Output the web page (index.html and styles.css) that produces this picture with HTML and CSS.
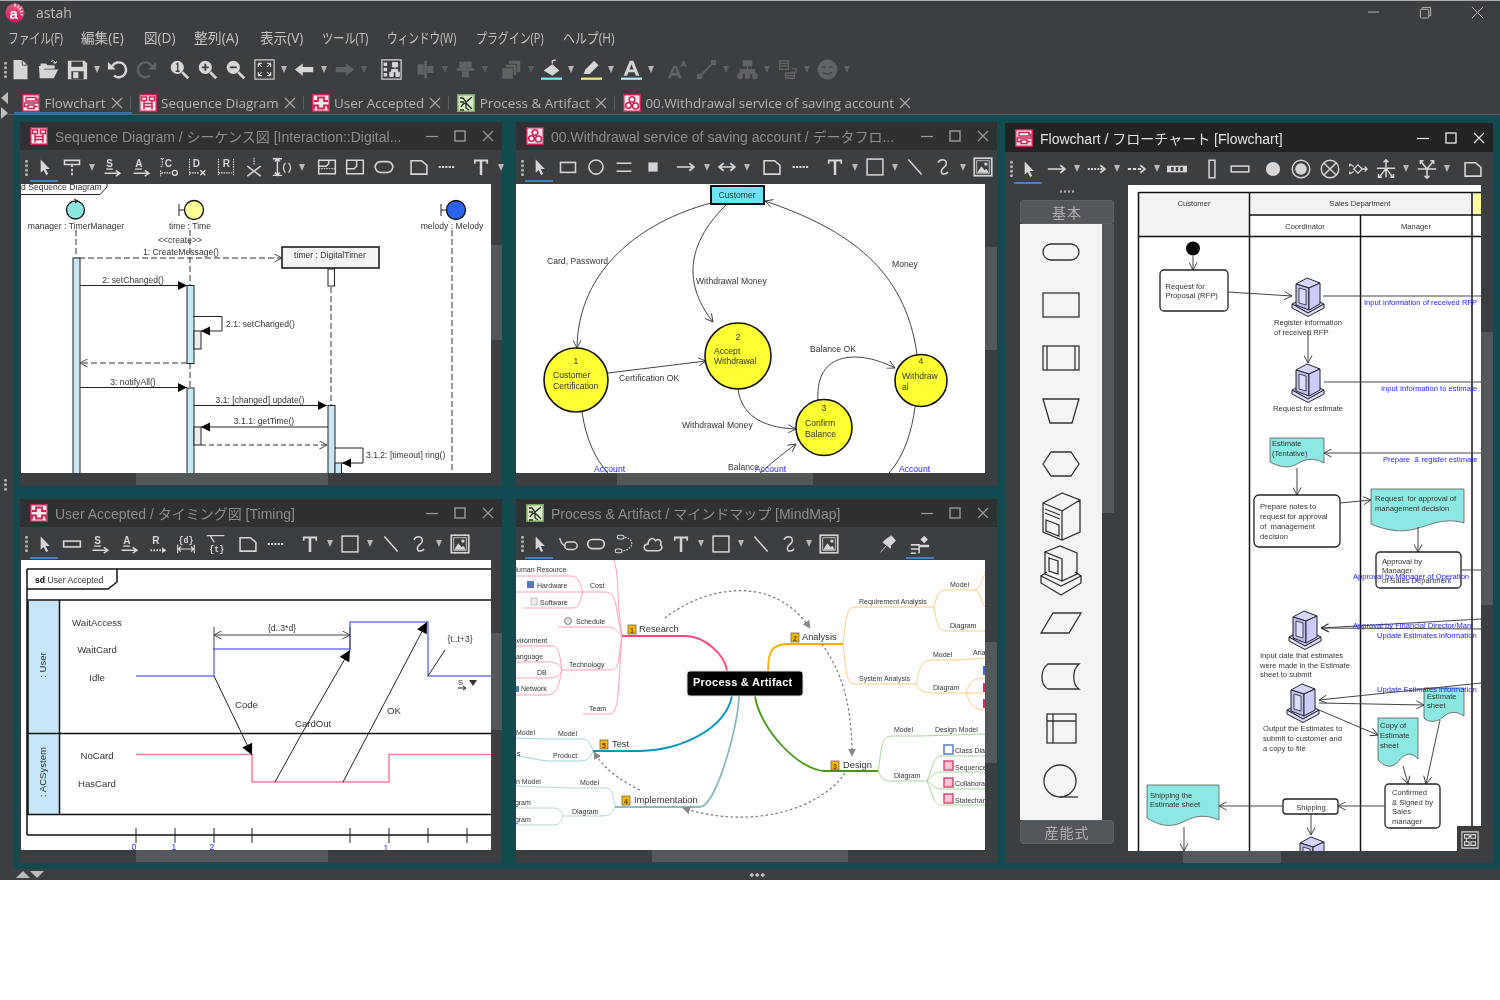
FILE: index.html
```html
<!DOCTYPE html>
<html lang="ja">
<head>
<meta charset="utf-8">
<title>astah</title>
<link rel="stylesheet" href="styles.css">
</head>
<body>
<svg class="defs" xmlns="http://www.w3.org/2000/svg">
  <defs>
    <linearGradient id="logoGrad" x1="0" y1="0" x2="0" y2="1"><stop offset="0" stop-color="#e05a7a"/><stop offset="1" stop-color="#d3175f"/></linearGradient>
    <marker id="op" viewBox="0 0 10 10" refX="9.5" refY="5" markerWidth="9" markerHeight="9" markerUnits="userSpaceOnUse" orient="auto-start-reverse"><path d="M1 .5L9.5 5L1 9.5" fill="none" stroke="#333" stroke-width="1"/></marker>
    <marker id="fl" viewBox="0 0 10 10" refX="10" refY="5" markerWidth="9" markerHeight="10" markerUnits="userSpaceOnUse" orient="auto-start-reverse"><path d="M0 0L10 5L0 10Z" fill="#000"/></marker>
    <marker id="flb" viewBox="0 0 10 10" refX="10" refY="5" markerWidth="12" markerHeight="11" markerUnits="userSpaceOnUse" orient="auto"><path d="M0 0L10 5L0 10Z" fill="#000"/></marker>
    <marker id="gr" viewBox="0 0 10 10" refX="9" refY="5" markerWidth="8" markerHeight="8" markerUnits="userSpaceOnUse" orient="auto"><path d="M0 0L10 5L0 10Z" fill="#888"/></marker>

    <symbol id="sel" viewBox="0 0 24 24"><path d="M8 3V19L11.5 15.5L14.5 21.5L17 20.5L14 14.5H19Z" fill="currentColor"/></symbol>
    <symbol id="T" viewBox="0 0 24 24"><path d="M3.500 3H20.500V8H18.500V5.500H13.500V21.500H10.500V5.500H5.500V8H3.500Z" fill="currentColor"/></symbol>
    <symbol id="box" viewBox="0 0 24 24"><rect x="2.500" y="2.500" width="19" height="19" fill="none" stroke="currentColor" stroke-width="1.8"/></symbol>
    <symbol id="ln" viewBox="0 0 24 24"><path d="M4 3L20 21" fill="none" stroke="currentColor" stroke-width="1.8"/></symbol>
    <symbol id="curl" viewBox="0 0 24 24"><path d="M6 7C8 2 16 2 16 8C16 12 10 13 10 17C10 22 16 21 18 18" fill="none" stroke="currentColor" stroke-width="1.800"/></symbol>
    <symbol id="pic" viewBox="0 0 24 24"><rect x="1.500" y="1.500" width="21" height="21" fill="#3c3f41" stroke="currentColor" stroke-width="2"/><rect x="4.500" y="4.500" width="15" height="15" fill="none" stroke="currentColor" stroke-width="1"/><path d="M5 19L10 11L14 16L16 14L19 19Z" fill="currentColor"/><circle cx="15.500" cy="8.500" r="2" fill="currentColor"/></symbol>
    <symbol id="note" viewBox="0 0 24 24"><path d="M2.500 4.500H15L21.500 10V20.500H2.500Z" fill="none" stroke="currentColor" stroke-width="1.900"/></symbol>
    <symbol id="dots" viewBox="0 0 24 24"><path d="M2 12H22" fill="none" stroke="currentColor" stroke-width="2.200" stroke-dasharray="2.600 1.400"/></symbol>
    <symbol id="arr" viewBox="0 0 24 24"><path d="M1 12H21M16 7.500L21.500 12L16 16.500" fill="none" stroke="currentColor" stroke-width="2"/></symbol>
    <symbol id="dbl" viewBox="0 0 24 24"><path d="M3 12H21M8 7.500L2.500 12L8 16.500M16 7.500L21.500 12L16 16.500" fill="none" stroke="currentColor" stroke-width="2"/></symbol>
    <symbol id="dotarr" viewBox="0 0 24 24"><path d="M1 12H19" fill="none" stroke="currentColor" stroke-width="2.200" stroke-dasharray="2.400 1.400"/><path d="M16 7.500L21.500 12L16 16.500" fill="none" stroke="currentColor" stroke-width="2"/></symbol>
    <symbol id="dasharr" viewBox="0 0 24 24"><path d="M1 12H19" fill="none" stroke="currentColor" stroke-width="2.200" stroke-dasharray="4 2"/><path d="M16 7.500L21.500 12L16 16.500" fill="none" stroke="currentColor" stroke-width="2"/></symbol>
    <symbol id="lane" viewBox="0 0 24 24"><rect x="0" y="8" width="24" height="8" fill="currentColor"/><path d="M5 9.500H8V14.500H5ZM10.500 9.500H13.500V14.500H10.500ZM16 9.500H19V14.500H16Z" fill="#3c3f41"/></symbol>
    <symbol id="wmin" viewBox="0 0 14 14"><path d="M1 7.5H13" stroke="currentColor" stroke-width="1.2"/></symbol>
    <symbol id="wmax" viewBox="0 0 14 14"><rect x="2" y="2" width="10" height="10" fill="none" stroke="currentColor" stroke-width="1.4"/></symbol>
    <symbol id="wclose" viewBox="0 0 14 14"><path d="M2 2L12 12M12 2L2 12" stroke="currentColor" stroke-width="1.2"/></symbol>

    <symbol id="d-flow" viewBox="0 0 18 18"><rect x=".75" y=".75" width="16.5" height="16.5" fill="#fbe6eb" stroke="#cc2457" stroke-width="1.5"/><path d="M4 3.5H14V7H4ZM6 11H12V14.500H6ZM14 5.500H16V9H2.500V12.500H6M12 12.500H15.500" fill="#fff" stroke="#cc2457" stroke-width="1.5"/></symbol>
    <symbol id="d-seq" viewBox="0 0 18 18"><rect x=".75" y=".75" width="16.5" height="16.5" fill="#fbe6eb" stroke="#cc2457" stroke-width="1.5"/><path d="M2.500 3H7.500V6.500H2.500ZM10.500 3H15.500V6.500H10.500ZM5 6.500V15.500M13 6.500V15.500M5 9.500H13M5 12.500H13" fill="#fff" stroke="#cc2457" stroke-width="1.5"/></symbol>
    <symbol id="d-time" viewBox="0 0 18 18"><rect x=".75" y=".75" width="16.5" height="16.5" fill="#fbe6eb" stroke="#cc2457" stroke-width="1.5"/><path d="M2 7H6V3.500H12V7H16M2 15.500V11.500H6V14.500H12V11.500H16V15.500" fill="none" stroke="#cc2457" stroke-width="1.8"/></symbol>
    <symbol id="d-dfd" viewBox="0 0 18 18"><rect x=".75" y=".75" width="16.5" height="16.5" fill="#fbe6eb" stroke="#cc2457" stroke-width="1.5"/><circle cx="9" cy="5.500" r="2.800" fill="#fff" stroke="#cc2457" stroke-width="1.6"/><circle cx="5.500" cy="11.500" r="2.800" fill="#fff" stroke="#cc2457" stroke-width="1.6"/><circle cx="12.500" cy="12" r="3" fill="#fff" stroke="#cc2457" stroke-width="1.6"/></symbol>
    <symbol id="d-mind" viewBox="0 0 18 18"><rect x=".75" y=".75" width="16.5" height="16.5" fill="#dcebc8" stroke="#79a860" stroke-width="1.5"/><path d="M3 4H6L9 8L15 3M3 8H7M4 13C6 9 8 9 9 9L15 15M9 9V14L12 16M3 16H7" fill="none" stroke="#1f3322" stroke-width="1.300"/></symbol>

    <symbol id="pc" viewBox="0 0 34 40"><path d="M1 27L17 19L33 27L17 36Z" fill="#ccccff" stroke="#222"/><path d="M1 27V31L17 39.5L33 31V27L17 36Z" fill="#dcdcff" stroke="#222"/><path d="M5 7L16 1L29 6L18 11Z" fill="#d6d6ff" stroke="#222"/><path d="M5 7L18 11V33L5 28Z" fill="#bfbfef" stroke="#222"/><path d="M18 11L29 6V27L18 33Z" fill="#ccccff" stroke="#222"/><path d="M8 11L15 13V28L8 26Z" fill="#dedeff" stroke="#222" stroke-width=".8"/></symbol>
  </defs>
</svg>

<div class="app">
  <div class="side-arrows"><span class="tri-l"></span><span class="tri-r"></span></div>

  <header class="titlebar">
    <svg class="logo" viewBox="0 0 20 20"><circle cx="10" cy="10" r="9.500" fill="url(#logoGrad)"/><text x="4.400" y="16" class="logo-a">a</text><path d="M10 .5V4M13.500 2.500L12.500 5.500M16.500 4.500L14 7M18 8.500L15 9M18 12L15.500 11.500" stroke="#fff" stroke-width="1.100"/></svg>
    <span class="app-name">astah</span>
    <div class="win-ctrls">
      <svg class="wc-min" viewBox="0 0 14 14"><path d="M1 6.5H13" stroke="currentColor"/></svg>
      <svg class="wc-res" viewBox="0 0 14 14"><path d="M3.5 3V1.5H12.5V10.5H10.5" fill="none" stroke="currentColor"/><rect x="1.5" y="3.5" width="9" height="9.5" rx="1.5" fill="none" stroke="currentColor"/></svg>
      <svg class="wc-close" viewBox="0 0 14 14"><path d="M1 1L13 13M13 1L1 13" stroke="currentColor"/></svg>
    </div>
  </header>

  <nav class="menubar">
    <span class="mi m1">ファイル(F)</span><span class="mi m2">編集(E)</span><span class="mi m3">図(D)</span><span class="mi m4">整列(A)</span><span class="mi m5">表示(V)</span><span class="mi m6">ツール(T)</span><span class="mi m7">ウィンドウ(W)</span><span class="mi m8">プラグイン(P)</span><span class="mi m9">ヘルプ(H)</span>
  </nav>

  <div class="maintools">
    <span class="grip"></span>
    <span class="c"><svg class="ic" viewBox="0 0 24 24"><path d="M4 1H14L20 7V23H4Z" fill="currentColor"/><path d="M14 1V7H20" fill="none" stroke="#3c3f41"/></svg></span>
    <span class="c g8"><svg class="ic" viewBox="0 0 24 24"><path d="M2 22L1 8H3V5H9L11 7H19V11H7L2 22L6 12H23L18 22Z" fill="currentColor"/><path d="M15 3C17 1 19 2 20 5M20 5L21.5 2.5M20 5L17.5 4" fill="none" stroke="currentColor" stroke-width="1.2"/></svg></span>
    <span class="c g9"><svg class="ic" viewBox="0 0 24 24"><path d="M1 2H20L23 5V23H1Z" fill="currentColor"/><rect x="5" y="3" width="13" height="6" fill="#3c3f41"/><rect x="5" y="14" width="14" height="9" fill="#3c3f41"/><rect x="7" y="15" width="6" height="7" fill="currentColor"/></svg></span>
    <span class="dd"></span>
    <span class="c"><svg class="ic" viewBox="0 0 24 24"><path d="M6 8A8.5 8.5 0 1 1 8 19" fill="none" stroke="currentColor" stroke-width="2.8"/><path d="M1 3V12H10Z" fill="currentColor"/></svg></span>
    <span class="c g9 dim"><svg class="ic" viewBox="0 0 24 24"><path d="M18 8A8.5 8.5 0 1 0 16 19" fill="none" stroke="currentColor" stroke-width="2.8"/><path d="M23 3V12H14Z" fill="currentColor"/></svg></span>
    <span class="c g13"><svg class="ic" viewBox="0 0 24 24"><circle cx="9.5" cy="9.5" r="7.5" fill="currentColor"/><path d="M15 15L22 22" stroke="currentColor" stroke-width="3.2"/><path d="M8 6L10 5V14M7.5 14H12" fill="none" stroke="#3c3f41" stroke-width="1.5"/></svg></span>
    <span class="c g8"><svg class="ic" viewBox="0 0 24 24"><circle cx="9.5" cy="9.5" r="7.5" fill="currentColor"/><path d="M15 15L22 22" stroke="currentColor" stroke-width="3.2"/><path d="M5.5 9.5H13.5M9.5 5.5V13.5" stroke="#3c3f41" stroke-width="2"/></svg></span>
    <span class="c g8"><svg class="ic" viewBox="0 0 24 24"><circle cx="9.5" cy="9.5" r="7.5" fill="currentColor"/><path d="M15 15L22 22" stroke="currentColor" stroke-width="3.2"/><path d="M5.5 9.5H13.5" stroke="#3c3f41" stroke-width="2"/></svg></span>
    <span class="c g9"><svg class="ic" viewBox="0 0 24 24"><rect x="1" y="1" width="22" height="22" fill="none" stroke="currentColor" stroke-width="1.3"/><path d="M5 5L9 9M5 5H9M5 5V9M19 5L15 9M19 5H15M19 5V9M5 19L9 15M5 19H9M5 19V15M19 19L15 15M19 19H15M19 19V15" fill="none" stroke="currentColor" stroke-width="1.4"/></svg></span>
    <span class="dd"></span>
    <span class="c"><svg class="ic" viewBox="0 0 24 24"><path d="M1 12L10 5V9H22V15H10V19Z" fill="currentColor"/></svg></span>
    <span class="dd"></span>
    <span class="c dim"><svg class="ic" viewBox="0 0 24 24"><path d="M23 12L14 5V9H2V15H14V19Z" fill="currentColor"/></svg></span>
    <span class="dd dim"></span>
    <span class="c g7"><svg class="ic" viewBox="0 0 24 24"><rect x="1" y="1" width="22" height="22" fill="none" stroke="currentColor" stroke-width="1.4"/><path d="M3 4H7V8H3ZM3 10H7V14H3ZM3 16H7V20H3Z" fill="currentColor"/><path d="M13 4H19V9H13ZM10 15H14V20H10ZM17 15H21V20H17ZM16 9V12M12 15V12H19V15" fill="currentColor" stroke="currentColor"/></svg></span>
    <span class="c g14 dim"><svg class="ic" viewBox="0 0 24 24"><path d="M12 2V22" stroke="currentColor" stroke-width="3"/><rect x="3" y="6" width="7" height="12" fill="currentColor"/><rect x="14" y="8" width="7" height="8" fill="currentColor"/></svg></span>
    <span class="dd dim"></span>
    <span class="c dim"><svg class="ic" viewBox="0 0 24 24"><path d="M2 12H22" stroke="currentColor" stroke-width="3"/><rect x="5" y="3" width="14" height="7" fill="currentColor"/><rect x="8" y="14" width="8" height="7" fill="currentColor"/></svg></span>
    <span class="dd dim"></span>
    <span class="c g6 dim"><svg class="ic" viewBox="0 0 24 24"><rect x="9" y="2" width="13" height="13" fill="currentColor"/><rect x="5" y="6" width="13" height="13" fill="currentColor" stroke="#3c3f41"/><rect x="1" y="10" width="13" height="13" fill="currentColor" stroke="#3c3f41"/></svg></span>
    <span class="dd dim"></span>
    <span class="c"><svg class="ic" viewBox="0 0 24 24"><path d="M3 13L13 6L21 13L13 19Z" fill="currentColor"/><path d="M13 5V2L17 1" fill="none" stroke="currentColor" stroke-width="1.6"/><path d="M0 22.500H24" stroke="#7fe7f2" stroke-width="2.600"/></svg></span>
    <span class="dd"></span>
    <span class="c"><svg class="ic" viewBox="0 0 24 24"><path d="M3 17L5 12L15 2L20 7L10 17Z" fill="currentColor"/><path d="M0 22.500H24" stroke="#f2ea7f" stroke-width="2.600"/></svg></span>
    <span class="dd"></span>
    <span class="c"><svg class="ic" viewBox="0 0 24 24"><path d="M3 19L10 2H14L21 19H17L15.5 15H8.5L7 19ZM9.7 12H14.3L12 6Z" fill="currentColor"/><path d="M0 22.500H24" stroke="#b8ecf2" stroke-width="2.600"/></svg></span>
    <span class="dd"></span>
    <span class="c g6 dim"><svg class="ic" viewBox="0 0 24 24"><path d="M1 22L7 8H11L17 22H13.5L12.5 19H5.5L4.5 22ZM6.5 16H11.5L9 10Z" fill="currentColor"/><path d="M15 9L18 2H20L23 9H21L20.5 8H17.5L17 9Z" fill="currentColor"/></svg></span>
    <span class="c g9 dim"><svg class="ic" viewBox="0 0 24 24"><path d="M5 19L19 5" stroke="currentColor" stroke-width="2"/><rect x="1" y="17" width="6" height="6" fill="currentColor"/><rect x="17" y="1" width="6" height="6" fill="currentColor"/></svg></span>
    <span class="dd dim"></span>
    <span class="c g1 dim"><svg class="ic" viewBox="0 0 24 24"><path d="M7 2H17V8H7ZM1 17H6V22H1ZM9.5 17H14.5V22H9.5ZM18 17H23V22H18ZM12 8V17M3.5 17V12H20.5V17" fill="currentColor" stroke="currentColor"/></svg></span>
    <span class="dd dim"></span>
    <span class="c dim"><svg class="ic" viewBox="0 0 24 24"><path d="M3 2H13V12H3ZM3 5H13M3 8H13M10 16H20V22H10ZM10 19H20M17 11H22V15H17" fill="none" stroke="currentColor" stroke-width="1.5"/></svg></span>
    <span class="dd dim"></span>
    <span class="c dim"><svg class="ic" viewBox="0 0 24 24"><circle cx="12" cy="12" r="11.500" fill="currentColor"/><path d="M6 10C7 8 9 8 10 10M14 10C15 8 17 8 18 10M7 15C9 18 15 18 17 15" fill="none" stroke="#3c3f41" stroke-width="1.2"/></svg></span>
    <span class="dd dim"></span>
  </div>

  <div class="tabs">
    <div class="tab tab-on"><svg class="dicon"><use href="#d-flow"/></svg><span class="tab-t">Flowchart</span><svg class="tab-x"><use href="#wclose"/></svg></div>
    <i class="tab-sep"></i>
    <div class="tab"><svg class="dicon"><use href="#d-seq"/></svg><span class="tab-t">Sequence Diagram</span><svg class="tab-x"><use href="#wclose"/></svg></div>
    <i class="tab-sep"></i>
    <div class="tab"><svg class="dicon"><use href="#d-time"/></svg><span class="tab-t">User Accepted</span><svg class="tab-x"><use href="#wclose"/></svg></div>
    <i class="tab-sep"></i>
    <div class="tab"><svg class="dicon"><use href="#d-mind"/></svg><span class="tab-t">Process &amp; Artifact</span><svg class="tab-x"><use href="#wclose"/></svg></div>
    <i class="tab-sep"></i>
    <div class="tab"><svg class="dicon"><use href="#d-dfd"/></svg><span class="tab-t">00.Withdrawal service of saving account</span><svg class="tab-x"><use href="#wclose"/></svg></div>
  </div>

  <main class="workspace">
    <aside class="side"><span class="grip"></span></aside>
    <div class="desktop">

      <!-- Sequence window -->
      <section class="win win-left win-top">
        <div class="wtitle"><svg class="dicon"><use href="#d-seq"/></svg><span class="wt">Sequence Diagram / シーケンス図 [Interaction::Digital...</span><div class="wbtn"><svg><use href="#wmin"/></svg><svg><use href="#wmax"/></svg><svg><use href="#wclose"/></svg></div></div>
        <div class="tools">
          <span class="grip"></span>
          <span class="c g2 on"><svg class="ic"><use href="#sel"/></svg></span>
          <span class="c g8"><svg class="ic" viewBox="0 0 24 24"><path d="M3 4H21V9H3Z" fill="none" stroke="currentColor" stroke-width="2"/><path d="M12 9V22" stroke="currentColor" stroke-width="2.200" stroke-dasharray="3 2"/></svg></span>
          <span class="dd"></span>
          <span class="c"><svg class="ic" viewBox="0 0 24 24"><text x="5" y="12" class="gl">S</text><path d="M5 14.500H13" stroke="currentColor" stroke-width="1.600"/><path d="M3 19.500H21M16.500 16L21.500 19.500L16.500 23" fill="none" stroke="currentColor" stroke-width="1.800"/></svg></span>
          <span class="c g9"><svg class="ic" viewBox="0 0 24 24"><text x="5" y="12" class="gl">A</text><path d="M5 14.500H13" stroke="currentColor" stroke-width="1.600"/><path d="M3 19.500H21M16.500 16L21.500 19.500L16.500 23" fill="none" stroke="currentColor" stroke-width="1.800"/></svg></span>
          <span class="c g8"><svg class="ic" viewBox="0 0 24 24"><text x="7" y="12" class="gl">C</text><path d="M2 2H6M4 2V10C4 12 2 12 2 10M2 16V23M3 19H15" fill="none" stroke="currentColor" stroke-width="1.400" stroke-dasharray="2 1"/><circle cx="19" cy="19" r="3" fill="none" stroke="currentColor" stroke-width="1.600"/></svg></span>
          <span class="c g8"><svg class="ic" viewBox="0 0 24 24"><text x="7" y="12" class="gl">D</text><path d="M3 2V23M3 19H15" fill="none" stroke="currentColor" stroke-width="1.400" stroke-dasharray="2 1"/><path d="M16 16L22 22M22 16L16 22" stroke="currentColor" stroke-width="1.700"/></svg></span>
          <span class="c g9"><svg class="ic" viewBox="0 0 24 24"><text x="8" y="12" class="gl">R</text><path d="M3 2V23M21 2V23M3 19H19" fill="none" stroke="currentColor" stroke-width="1.400" stroke-dasharray="2 1"/></svg></span>
          <span class="c g8"><svg class="ic" viewBox="0 0 24 24"><path d="M12 1V10" stroke="currentColor" stroke-width="1.400" stroke-dasharray="2 1"/><path d="M4 11L20 23M20 11L4 23" stroke="currentColor" stroke-width="1.800"/></svg></span>
          <span class="c g8"><svg class="ic" viewBox="0 0 24 24"><path d="M1 2H12M1 22H12M6.500 2V22M3.500 5.500L6.500 2L9.500 5.500M3.500 18.500L6.500 22L9.500 18.500" fill="none" stroke="currentColor" stroke-width="1.700"/><path d="M16 7C13 11 13 15 16 19M20 7C23 11 23 15 20 19" fill="none" stroke="currentColor" stroke-width="1.500"/></svg></span>
          <span class="dd"></span>
          <span class="c g5"><svg class="ic" viewBox="0 0 24 24"><path d="M2 4H22V20H2ZM2 11H11L14 8V4" fill="none" stroke="currentColor" stroke-width="1.800"/><path d="M2 14H22" stroke="currentColor" stroke-width="1.200" stroke-dasharray="2 1"/></svg></span>
          <span class="c g8"><svg class="ic" viewBox="0 0 24 24"><path d="M2 4H22V20H2ZM2 14H11L14 11V4" fill="none" stroke="currentColor" stroke-width="1.800"/></svg></span>
          <span class="c g9"><svg class="ic" viewBox="0 0 24 24"><rect x="1.500" y="5.500" width="21" height="13" rx="6.500" fill="none" stroke="currentColor" stroke-width="1.900"/></svg></span>
          <span class="c g15"><svg class="ic"><use href="#note"/></svg></span>
          <span class="c g8"><svg class="ic"><use href="#dots"/></svg></span>
          <span class="c g14"><svg class="ic"><use href="#T"/></svg></span>
          <span class="dd"></span>
        </div>
        <div class="wbody">
          <div class="cv cv-a">
            <svg class="dg" viewBox="21 184 470 289">
              <path class="k" d="M21 194.500H100L107 187V183"/>
              <text x="21" y="190" class="t9">d Sequence Diagram</text>
              <circle cx="75.500" cy="210" r="9" class="o" fill="#8ce6df"/><path class="k" d="M74 199L78 201L75 203"/>
              <circle cx="194" cy="210" r="9.500" class="o" fill="#ffff99"/><path class="k" d="M179 204V216M179 210H185"/>
              <circle cx="456" cy="210" r="9.500" class="o" fill="#2b62ee"/><path class="k" d="M441 204V216M441 210H447"/>
              <text x="76" y="229" class="t9 m">manager : TimerManager</text>
              <text x="190" y="229" class="t9 m">time : Time</text>
              <text x="452" y="229" class="t9 m">melody : Melody</text>
              <path class="ll" d="M76 230V258M190 230V285M190 363V388M331 287V405M452 230V473"/>
              <text x="180" y="243" class="t9 m">&lt;&lt;create&gt;&gt;</text>
              <text x="181" y="255" class="t9 m">1: CreateMessage()</text>
              <path class="dsh" d="M79 258H282" marker-end="url(#op)"/>
              <rect x="282" y="247" width="97" height="21" fill="#f2f3f2" stroke="#111" stroke-width="1.500"/>
              <text x="330" y="258" class="t9 m">timer : DigitalTimer</text>
              <rect x="328" y="269" width="6.500" height="17" class="k w"/>
              <rect x="73" y="258" width="7" height="220" class="act"/>
              <text x="133" y="283" class="t9 m">2: setChanged()</text>
              <path class="k" d="M80 285.500H187" marker-end="url(#fl)"/>
              <rect x="187" y="285.500" width="7" height="78" class="act"/>
              <rect x="194" y="331" width="7" height="18" class="k"/>
              <path class="k" d="M193 316.500H222V331H201" marker-end="url(#fl)"/>
              <text x="226" y="327" class="t9">2.1: setChanged()</text>
              <path class="dsh" d="M187 363H80" marker-end="url(#op)"/>
              <text x="133" y="385" class="t9 m">3: notifyAll()</text>
              <path class="k" d="M80 387.500H187" marker-end="url(#fl)"/>
              <rect x="187" y="388" width="7" height="90" class="act"/>
              <text x="260" y="403" class="t9 m">3.1: [changed] update()</text>
              <path class="k" d="M194 405.500H327" marker-end="url(#fl)"/>
              <rect x="328" y="405.500" width="7" height="75" class="act"/>
              <text x="264" y="424" class="t9 m">3.1.1: getTime()</text>
              <path class="k" d="M328 427H201" marker-end="url(#fl)"/>
              <rect x="194" y="427" width="7" height="18" class="k"/>
              <path class="dsh1" d="M201 445H327" marker-end="url(#op)"/>
              <path class="k" d="M335 448H363V463H342" marker-end="url(#fl)"/>
              <rect x="335" y="463" width="6.500" height="15" class="act"/>
              <text x="366" y="458" class="t9">3.1.2: [timeout] ring()</text>
            </svg>
          </div>
          <div class="vs"><i class="vthumb vt-a"></i></div>
        </div>
        <div class="hs"><i class="hthumb ht-a"></i></div>
      </section>

      <!-- DFD window -->
      <section class="win win-mid win-top">
        <div class="wtitle"><svg class="dicon"><use href="#d-dfd"/></svg><span class="wt">00.Withdrawal service of saving account / データフロ...</span><div class="wbtn"><svg><use href="#wmin"/></svg><svg><use href="#wmax"/></svg><svg><use href="#wclose"/></svg></div></div>
        <div class="tools">
          <span class="grip"></span>
          <span class="c g1 on"><svg class="ic"><use href="#sel"/></svg></span>
          <span class="c g9"><svg class="ic" viewBox="0 0 24 24"><rect x="3" y="6.500" width="18" height="12" fill="none" stroke="currentColor" stroke-width="1.900"/></svg></span>
          <span class="c g8"><svg class="ic" viewBox="0 0 24 24"><circle cx="12" cy="12" r="8.500" fill="none" stroke="currentColor" stroke-width="1.900"/></svg></span>
          <span class="c g8"><svg class="ic" viewBox="0 0 24 24"><path d="M3 7.500H21M3 17H21" stroke="currentColor" stroke-width="1.900"/></svg></span>
          <span class="c g9"><svg class="ic" viewBox="0 0 24 24"><rect x="6.500" y="6.500" width="11" height="11" fill="currentColor"/></svg></span>
          <span class="c g13"><svg class="ic"><use href="#arr"/></svg></span>
          <span class="dd g1"></span>
          <span class="c"><svg class="ic"><use href="#dbl"/></svg></span>
          <span class="dd"></span>
          <span class="c g5"><svg class="ic"><use href="#note"/></svg></span>
          <span class="c g9"><svg class="ic"><use href="#dots"/></svg></span>
          <span class="c g14"><svg class="ic"><use href="#T"/></svg></span>
          <span class="dd"></span>
          <span class="c"><svg class="ic"><use href="#box"/></svg></span>
          <span class="dd"></span>
          <span class="c"><svg class="ic"><use href="#ln"/></svg></span>
          <span class="c g8"><svg class="ic"><use href="#curl"/></svg></span>
          <span class="dd"></span>
          <span class="c"><svg class="ic"><use href="#pic"/></svg></span>
        </div>
        <div class="wbody">
          <div class="cv cv-b">
            <svg class="dg" viewBox="516 184 469 289">
              <path class="c1" d="M711 203C640 222 578 270 577 348" marker-end="url(#op)"/>
              <path class="c1" d="M727 204C690 240 680 280 713 322" marker-end="url(#op)"/>
              <path class="c1" d="M917 354C905 270 850 230 765 201" marker-end="url(#op)"/>
              <path class="c1" d="M608 373L706 361" marker-end="url(#op)"/>
              <path class="c1" d="M738 389C742 420 770 428 796 429" marker-end="url(#op)"/>
              <path class="c1" d="M818 400C815 350 860 350 895 368" marker-end="url(#op)"/>
              <path class="c1" d="M582 412C586 440 596 460 608 473"/>
              <path class="c1" d="M760 473C775 460 785 452 796 444" marker-end="url(#op)"/>
              <path class="c1" d="M915 407C912 430 905 455 889 473"/>
              <rect x="711" y="186" width="53" height="18" fill="#6be5f5" stroke="#111" stroke-width="2"/>
              <text x="737" y="198" class="t9 m">Customer</text>
              <circle cx="576" cy="380" r="32" class="nd"/><circle cx="738" cy="356" r="33" class="nd"/><circle cx="824" cy="427.500" r="28" class="nd"/><circle cx="921" cy="380.500" r="26" class="nd"/>
              <text x="547" y="264" class="t9">Card, Password</text>
              <text x="696" y="284" class="t9">Withdrawal Money</text>
              <text x="892" y="267" class="t9">Money</text>
              <text x="576" y="364" class="t9 m">1</text><text x="553" y="378" class="t9">Customer</text><text x="553" y="389" class="t9">Certification</text>
              <text x="619" y="381" class="t9">Certification OK</text>
              <text x="738" y="340" class="t9 m">2</text><text x="714" y="354" class="t9">Accept</text><text x="714" y="364" class="t9">Withdrawal</text>
              <text x="824" y="411" class="t9 m">3</text><text x="805" y="426" class="t9">Confirm</text><text x="805" y="437" class="t9">Balance</text>
              <text x="921" y="364" class="t9 m">4</text><text x="902" y="379" class="t9">Withdraw</text><text x="902" y="390" class="t9">al</text>
              <text x="682" y="428" class="t9">Withdrawal Money</text>
              <text x="810" y="352" class="t9">Balance OK</text>
              <text x="728" y="470" class="t9">Balance</text>
              <text x="594" y="472" class="t9 bl">Account</text><text x="755" y="472" class="t9 bl">Account</text><text x="899" y="472" class="t9 bl">Account</text>
            </svg>
          </div>
          <div class="vs"><i class="vthumb vt-b"></i></div>
        </div>
        <div class="hs"><i class="hthumb ht-b"></i></div>
      </section>

      <!-- Flowchart window -->
      <section class="win win-right win-active">
        <div class="wtitle"><svg class="dicon"><use href="#d-flow"/></svg><span class="wt">Flowchart / フローチャート [Flowchart]</span><div class="wbtn"><svg><use href="#wmin"/></svg><svg><use href="#wmax"/></svg><svg><use href="#wclose"/></svg></div></div>
        <div class="tools">
          <span class="grip"></span>
          <span class="c g1 on"><svg class="ic"><use href="#sel"/></svg></span>
          <span class="c g9"><svg class="ic"><use href="#arr"/></svg></span>
          <span class="dd"></span>
          <span class="c"><svg class="ic"><use href="#dotarr"/></svg></span>
          <span class="dd"></span>
          <span class="c"><svg class="ic"><use href="#dasharr"/></svg></span>
          <span class="dd"></span>
          <span class="c"><svg class="ic"><use href="#lane"/></svg></span>
          <span class="c g15"><svg class="ic" viewBox="0 0 24 24"><rect x="8.500" y="1.500" width="7" height="21" fill="none" stroke="currentColor" stroke-width="1.800"/></svg></span>
          <span class="c g8"><svg class="ic" viewBox="0 0 24 24"><rect x="1.500" y="8.500" width="21" height="7" fill="none" stroke="currentColor" stroke-width="1.800"/></svg></span>
          <span class="c g13"><svg class="ic" viewBox="0 0 24 24"><circle cx="12" cy="12" r="8.500" fill="currentColor"/></svg></span>
          <span class="c g8"><svg class="ic" viewBox="0 0 24 24"><circle cx="12" cy="12" r="10.500" fill="none" stroke="currentColor" stroke-width="1.700"/><circle cx="12" cy="12" r="7" fill="currentColor"/></svg></span>
          <span class="c g9"><svg class="ic" viewBox="0 0 24 24"><circle cx="12" cy="12" r="10.500" fill="none" stroke="currentColor" stroke-width="1.700"/><path d="M5 5L19 19M19 5L5 19" stroke="currentColor" stroke-width="1.700"/></svg></span>
          <span class="c g8"><svg class="ic" viewBox="0 0 24 24"><path d="M7 12L12 7L17 12L12 17ZM2 6L7 9M2 18L7 15M17 12H23M20 9L23 12L20 15M2 6V9M2 18V15" fill="none" stroke="currentColor" stroke-width="1.600"/></svg></span>
          <span class="c g8"><svg class="ic" viewBox="0 0 24 24"><path d="M12 1V10M9 4L12 1L15 4M1 11H23M12 11L4 22M12 11L20 22M12 11V22M3 18V22H7M21 18V22H17" fill="none" stroke="currentColor" stroke-width="1.800"/></svg></span>
          <span class="dd"></span>
          <span class="c g1"><svg class="ic" viewBox="0 0 24 24"><path d="M1 12H23M12 12V23M9 20L12 23L15 20M4 2L12 12L20 2M4 6V2H8M20 6V2H16" fill="none" stroke="currentColor" stroke-width="1.800"/></svg></span>
          <span class="dd"></span>
          <span class="c g6"><svg class="ic"><use href="#note"/></svg></span>
        </div>
        <div class="wbody">
          <aside class="palette">
            <span class="pal-dots"></span>
            <div class="pal-head">基本</div>
            <div class="pal-list">
              <div class="pal-items">
                <svg class="pal-svg" viewBox="1020 224 82 595">
                  <rect x="1043" y="244" width="36" height="16" rx="8" class="ps"/>
                  <rect x="1043" y="293" width="36" height="24" class="ps"/>
                  <rect x="1043" y="346" width="36" height="24" class="ps"/><path class="ps" d="M1047 346V370M1075 346V370"/>
                  <path class="ps" d="M1043 399H1079L1072 423H1050Z"/>
                  <path class="ps" d="M1043 464L1051 452H1071L1079 464L1071 476H1051Z"/>
                  <path class="ps" d="M1043 503L1062 493L1080 500V532L1062 540L1043 532ZM1043 503L1062 511V540M1062 511L1080 500M1045 509L1060 515M1045 513L1060 519M1046 520L1059 525V536L1046 531Z"/>
                  <path class="ps" d="M1041 576L1047 572M1041 576V583L1061 595L1081 583V576L1061 586ZM1041 576L1061 586L1081 576L1075 572M1045 552L1060 546L1077 553V574L1062 581V559ZM1045 552L1062 559M1045 552V574L1062 581M1049 558L1058 561V574L1049 571Z"/>
                  <path class="ps" d="M1041 633L1053 613H1081L1069 633Z"/>
                  <path class="ps" d="M1079 664H1048C1040 670 1040 684 1048 689H1079C1072 684 1072 670 1079 664Z"/>
                  <rect x="1047" y="714" width="29" height="29" class="ps"/><path class="ps" d="M1053 714V743M1047 721H1076"/>
                  <circle cx="1060" cy="781" r="16" class="ps"/><path class="ps" d="M1060 797H1078"/>
                </svg>
              </div>
              <div class="pal-sb"><i class="pal-thumb"></i></div>
            </div>
            <div class="pal-foot">産能式</div>
          </aside>
          <div class="cv cv-c">
            <svg class="dg" viewBox="1128 185 353 666">
              <rect x="1139" y="193" width="110" height="43" fill="#f2f3f2"/>
              <rect x="1250" y="193" width="221" height="21" fill="#f2f3f2"/>
              <rect x="1473" y="193" width="8" height="21" fill="#ffff99"/>
              <path class="thick" d="M1138.500 192.500H1481M1250 215H1481M1139 236.500H1481M1138.500 192V851M1249.500 192V851M1360.500 215V851M1472 192V851"/>
              <text x="1194" y="206" class="t8 m">Customer</text><text x="1360" y="206" class="t8 m">Sales Department</text>
              <text x="1305" y="229" class="t8 m">Coordinator</text><text x="1416" y="229" class="t8 m">Manager</text>

              <circle cx="1193" cy="248.500" r="7" fill="#000"/>
              <path class="c1" d="M1193 256V270" marker-end="url(#op)"/>
              <rect x="1160" y="270" width="68" height="41" rx="4" class="bx"/>
              <text x="1165.500" y="289" class="t8">Request for</text><text x="1165.500" y="298" class="t8">Proposal (RFP)</text>
              <path class="c1" d="M1228 292L1292 296" marker-end="url(#op)"/>
              <svg x="1291" y="277" width="34" height="40"><use href="#pc"/></svg>
              <text x="1274" y="325" class="t8">Register information</text><text x="1274" y="335" class="t8">of received RFP</text>
              <path class="c1" d="M1323 296H1481"/>
              <text x="1364" y="305" class="t8 bl">Input information of received RFP</text>
              <path class="c1" d="M1308 330V363" marker-end="url(#op)"/>
              <svg x="1291" y="363" width="34" height="40"><use href="#pc"/></svg>
              <text x="1273" y="411" class="t8">Request for estimate</text>
              <path class="c1" d="M1324 382H1481"/>
              <text x="1381" y="391" class="t8 bl">Input Information to estimate</text>
              <path class="doc" d="M1270 438H1324V463C1312 457 1305 459 1297 464C1288 469 1280 467 1270 462Z"/>
              <text x="1272" y="446" class="t8">Estimate</text><text x="1272" y="456" class="t8">(Tentative)</text>
              <path class="c1" d="M1481 453H1324" marker-end="url(#op)"/>
              <text x="1383" y="462" class="t8 bl">Prepare &#160;&amp; register estimate</text>
              <path class="c1" d="M1297 468V495" marker-end="url(#op)"/>
              <rect x="1254" y="495" width="86" height="52" rx="5" class="bx"/>
              <text x="1260" y="509" class="t8">Prepare notes to</text><text x="1260" y="519" class="t8">request for approval</text><text x="1260" y="529" class="t8">of &#160;management</text><text x="1260" y="539" class="t8">decision</text>
              <path class="c1" d="M1340 503L1371 500" marker-end="url(#op)"/>
              <path class="doc" d="M1371 489H1464V523C1445 517 1430 525 1415 529C1400 533 1385 530 1371 524Z"/>
              <text x="1375" y="501" class="t8">Request &#160;for approval of</text><text x="1375" y="511" class="t8">management decision</text>
              <path class="c1" d="M1418 527V552" marker-end="url(#op)"/>
              <rect x="1376" y="552" width="85" height="36" rx="4" class="bx"/>
              <text x="1382" y="564" class="t8">Approval by</text><text x="1382" y="573" class="t8">Manager</text><text x="1382" y="583" class="t8">of Sales Department</text>
              <path class="c1" d="M1461 570H1481"/>
              <text x="1353" y="579" class="t8 bl">Approval by Manager of Operation</text>
              <svg x="1288" y="610" width="34" height="40"><use href="#pc"/></svg>
              <path class="c1" d="M1481 619L1321 628" marker-end="url(#op)"/>
              <path class="c1" d="M1481 629L1321 628" marker-end="url(#op)"/>
              <text x="1353" y="628" class="t8 bl">Approval by Financial Director/Man</text>
              <text x="1377" y="638" class="t8 bl">Update Estimates information</text>
              <text x="1260" y="658" class="t8">Input date that estimates</text><text x="1260" y="668" class="t8">were made in the Estimate</text><text x="1260" y="677" class="t8">sheet to submit</text>
              <svg x="1286" y="683" width="34" height="40"><use href="#pc"/></svg>
              <text x="1263" y="731" class="t8">Output the Estimates to</text><text x="1263" y="741" class="t8">submit to customer and</text><text x="1263" y="751" class="t8">a copy to file</text>
              <path class="doc" d="M1424 688H1464V716C1455 710 1448 712 1442 718C1435 723 1428 722 1424 718Z"/>
              <text x="1427" y="699" class="t8">Estimate</text><text x="1427" y="708" class="t8">sheet</text>
              <text x="1377" y="692" class="t8 bl">Update Estimates information</text>
              <path class="c1" d="M1481 683L1319 700" marker-end="url(#op)"/>
              <path class="c1" d="M1319 703L1424 705" marker-end="url(#op)"/>
              <path class="c1" d="M1319 710L1378 735" marker-end="url(#op)"/>
              <path class="doc" d="M1378 718H1418V759C1410 750 1403 755 1397 763C1390 769 1384 766 1378 760Z"/>
              <text x="1380" y="728" class="t8">Copy of</text><text x="1380" y="738" class="t8">Estimate</text><text x="1380" y="748" class="t8">sheet</text>
              <path class="c1" d="M1403 766L1408 784" marker-end="url(#op)"/>
              <path class="c1" d="M1440 720L1426 784" marker-end="url(#op)"/>
              <rect x="1385" y="784" width="55" height="44" rx="4" class="bx"/>
              <text x="1392" y="795" class="t8">Confirmed</text><text x="1392" y="805" class="t8">&amp; Signed by</text><text x="1392" y="814" class="t8">Sales</text><text x="1392" y="824" class="t8">manager</text>
              <path class="c1" d="M1385 806H1338" marker-end="url(#op)"/>
              <rect x="1283" y="799" width="55" height="15" rx="3" class="bx"/>
              <text x="1311" y="810" class="t8 m">Shipping</text>
              <path class="c1" d="M1283 806H1219" marker-end="url(#op)"/>
              <path class="doc" d="M1147 785H1219V820C1205 814 1195 816 1185 821C1170 829 1158 825 1147 818Z"/>
              <text x="1150" y="798" class="t8">Shipping the</text><text x="1150" y="807" class="t8">Estimate sheet</text>
              <path class="c1" d="M1184 827V851" marker-end="url(#op)"/>
              <path class="c1" d="M1311 814V835" marker-end="url(#op)"/>
              <svg x="1295" y="836" width="34" height="40"><use href="#pc"/></svg>
            </svg>
            <div class="minimap"><svg viewBox="0 0 20 20"><path d="M1 1H19V19H1ZM4 4H9V8H4ZM11 4H16V8H11ZM4 12H9V16H4ZM11 12H16V16H11ZM9 6H11M6 8V12" fill="none" stroke="#ddd" stroke-width="1.200"/></svg></div>
          </div>
          <div class="vs"><i class="vthumb vt-c"></i></div>
        </div>
        <div class="hs"><i class="hthumb ht-c"></i></div>
      </section>

      <!-- Timing window -->
      <section class="win win-left">
        <div class="wtitle"><svg class="dicon"><use href="#d-time"/></svg><span class="wt">User Accepted / タイミング図 [Timing]</span><div class="wbtn"><svg><use href="#wmin"/></svg><svg><use href="#wmax"/></svg><svg><use href="#wclose"/></svg></div></div>
        <div class="tools">
          <span class="grip"></span>
          <span class="c g2 on"><svg class="ic"><use href="#sel"/></svg></span>
          <span class="c g8"><svg class="ic" viewBox="0 0 24 24"><rect x="2" y="8.500" width="20" height="7" fill="none" stroke="currentColor" stroke-width="1.900"/></svg></span>
          <span class="c g8"><svg class="ic" viewBox="0 0 24 24"><text x="5" y="12" class="gl">S</text><path d="M5 14.500H13" stroke="currentColor" stroke-width="1.600"/><path d="M3 19.500H21M16.500 16L21.500 19.500L16.500 23" fill="none" stroke="currentColor" stroke-width="1.800"/></svg></span>
          <span class="c g9"><svg class="ic" viewBox="0 0 24 24"><text x="5" y="12" class="gl">A</text><path d="M5 14.500H13" stroke="currentColor" stroke-width="1.600"/><path d="M3 19.500H21M16.500 16L21.500 19.500L16.500 23" fill="none" stroke="currentColor" stroke-width="1.800"/></svg></span>
          <span class="c g9"><svg class="ic" viewBox="0 0 24 24"><text x="5" y="12" class="gl">R</text><path d="M3 19.500H18" fill="none" stroke="currentColor" stroke-width="2.200" stroke-dasharray="2 1.500"/><path d="M17 16L22 19.500L17 23" fill="currentColor"/></svg></span>
          <span class="c g8"><svg class="ic" viewBox="0 0 24 24"><text x="12" y="11" class="gs">{d}</text><path d="M2 13V23M22 13V23M3 18H21M6 15L3 18L6 21M18 15L21 18L18 21" fill="none" stroke="currentColor" stroke-width="1.400"/></svg></span>
          <span class="c g10"><svg class="ic" viewBox="0 0 24 24"><text x="13" y="22" class="gs">{t}</text><path d="M1 2H22M5 2L10 10" fill="none" stroke="currentColor" stroke-width="1.500"/></svg></span>
          <span class="c g12"><svg class="ic"><use href="#note"/></svg></span>
          <span class="c g8"><svg class="ic"><use href="#dots"/></svg></span>
          <span class="c g14"><svg class="ic"><use href="#T"/></svg></span>
          <span class="dd"></span>
          <span class="c"><svg class="ic"><use href="#box"/></svg></span>
          <span class="dd"></span>
          <span class="c g1"><svg class="ic"><use href="#ln"/></svg></span>
          <span class="c g8"><svg class="ic"><use href="#curl"/></svg></span>
          <span class="dd"></span>
          <span class="c g1"><svg class="ic"><use href="#pic"/></svg></span>
        </div>
        <div class="wbody">
          <div class="cv cv-d">
            <svg class="dg" viewBox="21 560 470 290">
              <rect x="28" y="601" width="31" height="132" fill="#c5e6f7"/>
              <rect x="28" y="734" width="31" height="80" fill="#c5e6f7"/>
              <path class="thick" d="M27 569H491M27 569V835M27 600H491M59.500 600V815M27 733.500H491M27 814.500H491M27 835H491M28 601V815"/>
              <path class="thick" d="M117 569V582L108 589H27"/>
              <text x="35" y="583" class="t9"><tspan class="bd">sd</tspan> User Accepted</text>
              <text x="46" y="665" class="t10 m rot-a">: User</text>
              <text x="46" y="772" class="t10 m rot-b">: ACSystem</text>
              <text x="97" y="626" class="t10 m">WaitAccess</text><text x="97" y="653" class="t10 m">WaitCard</text><text x="97" y="681" class="t10 m">Idle</text>
              <text x="97" y="759" class="t10 m">NoCard</text><text x="97" y="787" class="t10 m">HasCard</text>
              <path d="M136 676H214V649H350V622H428V676H491" fill="none" stroke="#7474ff" stroke-width="1.500"/>
              <path d="M136 754.500H252V782H389V754.500H491" fill="none" stroke="#ff7c9c" stroke-width="1.500"/>
              <path class="c1" d="M214 627V650M350 627V650"/>
              <path class="c1" d="M214 635H350" marker-end="url(#op)" marker-start="url(#op)"/>
              <text x="282" y="631" class="t9 m">{d..3*d}</text>
              <path class="k" d="M214 676L252 755" marker-end="url(#flb)"/>
              <text x="235" y="708" class="t10">Code</text>
              <path class="k" d="M275 782L301 735L350 650" marker-end="url(#flb)"/>
              <text x="295" y="727" class="t10">CardOut</text>
              <path class="k" d="M343 782L427 622" marker-end="url(#flb)"/>
              <text x="387" y="714" class="t10">OK</text>
              <text x="460" y="642" class="t9 m">{t..t+3}</text>
              <path class="k" d="M428 676L445 650"/>
              <text x="458" y="685" class="t8 tu">S</text><path class="k" d="M458 688H466M463 686L466 688L463 690"/><path d="M469 680H477L473 686Z" fill="#333"/>
              <path class="k" d="M136 828V843M175 828V843M214 828V843M252 828V843M350 828V843M389 828V843M428 828V843M467 828V843"/>
              <text x="134" y="850" class="t9 bl m">0</text><text x="174" y="850" class="t9 bl m">1</text><text x="212" y="850" class="t9 bl m">2</text><text x="386" y="851" class="t9 bl m">1</text>
            </svg>
          </div>
          <div class="vs"><i class="vthumb vt-d"></i></div>
        </div>
        <div class="hs"><i class="hthumb ht-a"></i></div>
      </section>

      <!-- MindMap window -->
      <section class="win win-mid">
        <div class="wtitle"><svg class="dicon"><use href="#d-mind"/></svg><span class="wt">Process &amp; Artifact / マインドマップ [MindMap]</span><div class="wbtn"><svg><use href="#wmin"/></svg><svg><use href="#wmax"/></svg><svg><use href="#wclose"/></svg></div></div>
        <div class="tools">
          <span class="grip"></span>
          <span class="c g1 on"><svg class="ic"><use href="#sel"/></svg></span>
          <span class="c g9"><svg class="ic" viewBox="0 0 24 24"><path d="M2 5C4 12 6 14 9 14" fill="none" stroke="currentColor" stroke-width="1.700"/><rect x="8" y="9.500" width="15" height="9" rx="4.500" fill="none" stroke="currentColor" stroke-width="1.700"/></svg></span>
          <span class="c g8"><svg class="ic" viewBox="0 0 24 24"><rect x="2" y="6.500" width="20" height="11" rx="5.500" fill="none" stroke="currentColor" stroke-width="1.900"/></svg></span>
          <span class="c g8"><svg class="ic" viewBox="0 0 24 24"><rect x="4" y="1.500" width="8" height="4.500" rx="2.200" fill="none" stroke="currentColor" stroke-width="1.400"/><rect x="1.500" y="18" width="8" height="4.500" rx="2.200" fill="none" stroke="currentColor" stroke-width="1.400"/><path d="M13 4C24 5 25 18 11 20" fill="none" stroke="currentColor" stroke-width="1.400" stroke-dasharray="2 1.500"/></svg></span>
          <span class="c g9"><svg class="ic" viewBox="0 0 24 24"><path d="M6 20C0 20 0 12 6 12C6 6 12 3 15 8C19 4 23 9 21 13C24 15 23 20 18 20Z" fill="none" stroke="currentColor" stroke-width="1.800"/></svg></span>
          <span class="c g8"><svg class="ic"><use href="#T"/></svg></span>
          <span class="dd"></span>
          <span class="c"><svg class="ic"><use href="#box"/></svg></span>
          <span class="dd"></span>
          <span class="c"><svg class="ic"><use href="#ln"/></svg></span>
          <span class="c g8"><svg class="ic"><use href="#curl"/></svg></span>
          <span class="dd"></span>
          <span class="c"><svg class="ic"><use href="#pic"/></svg></span>
          <span class="c g39"><svg class="ic" viewBox="0 0 24 24"><path d="M3 22L10 14M9 7L16 2L21 8L15 14L15 17L6 10Z" fill="currentColor" stroke="currentColor"/></svg></span>
          <span class="c g12 on"><svg class="ic" viewBox="0 0 24 24"><path d="M1 13H11V23M1 23H7M1 18H10" fill="none" stroke="currentColor" stroke-width="1.900"/><path d="M17 2L21.500 6.500L17 11L12.500 6.500ZM12 13H23V16H12Z" fill="currentColor"/></svg></span>
        </div>
        <div class="wbody">
          <div class="cv cv-e">
            <svg class="dg" viewBox="516 560 469 290">
              <g class="lp">
                <path d="M622 636C616 600 620 580 614 560"/>
                <path d="M622 636C615 610 618 592 605 592H516"/>
                <path d="M583 592C580 585 580 576 570 576H516"/>
                <path d="M583 592C580 600 580 608 572 608H523"/>
                <path d="M622 636C616 630 615 627 608 627H558"/>
                <path d="M622 636C618 660 620 670 610 670H562"/>
                <path d="M562 670C560 660 560 646 552 646H516"/>
                <path d="M562 670C560 665 556 662 550 662H516"/>
                <path d="M562 670C560 675 556 678 550 678H516"/>
                <path d="M562 670C558 690 556 695 545 695H516"/>
                <path d="M622 636C618 680 620 714 610 714H583"/>
              </g>
              <g class="lo">
                <path d="M843 644C846 620 846 607 855 607H934"/>
                <path d="M934 607C937 595 938 590 948 590H975C980 590 982 578 985 575"/>
                <path d="M975 590C980 590 982 605 985 607"/>
                <path d="M934 607C937 625 938 631 948 631H985"/>
                <path d="M843 644C846 670 846 684 855 684H916"/>
                <path d="M916 684C920 670 920 660 932 660H960L985 658"/>
                <path d="M916 684C920 692 925 693 932 693H966"/>
                <path d="M966 693C970 680 975 678 985 678M966 693H985M966 693C970 705 975 710 985 710"/>
              </g>
              <g class="lg">
                <path d="M878 771C882 750 880 736 892 736H920L985 734"/>
                <path d="M878 771C882 780 885 781 892 781H927"/>
                <path d="M927 781C935 760 934 756 942 756H985"/>
                <path d="M927 781C933 775 934 772 942 772H985"/>
                <path d="M927 781C933 785 934 789 942 789H985"/>
                <path d="M927 781C935 800 934 805 942 805H985"/>
              </g>
              <g class="lb">
                <path d="M593 751C590 740 586 739 580 739H545L516 738"/>
                <path d="M593 751C590 760 586 761 578 761H550C540 761 530 757 516 756"/>
              </g>
              <g class="lt">
                <path d="M615 806C612 790 612 788 605 788H570L516 786"/>
                <path d="M615 806C612 815 608 816 600 816H563"/>
                <path d="M563 816C560 808 558 808 550 808H516"/>
                <path d="M563 816C560 825 558 825 550 825H516"/>
              </g>
              <path d="M727 671C725 655 705 636 685 636H622" class="b" stroke="#ff4477"/>
              <path d="M768 671C768 650 772 644 790 644H843" class="b" stroke="#ffaa00"/>
              <path d="M755 696C760 730 800 771 825 771H878" class="b" stroke="#449911"/>
              <path d="M732 696C725 730 680 750 640 751H593" class="b" stroke="#0099bb"/>
              <path d="M739 696C738 730 715 807 700 807H615" class="b" stroke="#88bbbb"/>
              <path class="dg-arc" d="M665 618C700 590 770 570 810 628" marker-end="url(#gr)"/>
              <path class="dg-arc" d="M822 644C840 670 852 700 852 756" marker-end="url(#gr)"/>
              <path class="dg-arc" d="M845 773C820 810 750 830 683 808" marker-end="url(#gr)"/>
              <path class="dg-arc" d="M640 790C620 780 605 770 594 752" marker-end="url(#gr)"/>

              <rect x="687" y="671" width="116" height="25" rx="3" fill="#000" stroke="#ddd"/>
              <text x="693" y="685.500" class="ttl">Process &amp; Artifact</text>

              <rect x="628" y="625" width="8" height="9" class="tg"/><text x="632" y="632.500" class="tn m">1</text><text x="639" y="632" class="t10">Research</text>
              <rect x="791" y="633" width="8" height="9" class="tg"/><text x="795" y="640.500" class="tn m">2</text><text x="802" y="640" class="t10">Analysis</text>
              <rect x="831" y="761" width="8" height="9" class="tg"/><text x="835" y="768.500" class="tn m">3</text><text x="843" y="768" class="t10">Design</text>
              <rect x="600" y="740" width="8" height="9" class="tg"/><text x="604" y="747.500" class="tn m">5</text><text x="612" y="747" class="t10">Test</text>
              <rect x="622" y="796" width="8" height="9" class="tg"/><text x="626" y="803.500" class="tn m">4</text><text x="634" y="803" class="t10">Implementation</text>

              <text x="512" y="572" class="t7">Human Resource</text>
              <text x="590" y="588" class="t7">Cost</text>
              <rect x="527" y="581" width="7" height="7" fill="#5577bb"/><text x="537" y="588" class="t7">Hardware</text>
              <rect x="531" y="598" width="6" height="7" fill="#eee" stroke="#999" stroke-width=".6"/><text x="540" y="605" class="t7">Software</text>
              <circle cx="568" cy="621" r="3.500" fill="#ddd" stroke="#888"/><text x="576" y="624" class="t7">Schedule</text>
              <text x="508" y="643" class="t7">Environment</text>
              <text x="569" y="667" class="t7">Technology</text>
              <text x="512" y="659" class="t7">Language</text>
              <text x="537" y="675" class="t7">DB</text>
              <rect x="516" y="686" width="3" height="6" fill="#5577bb"/><text x="521" y="691" class="t7">Network</text>
              <text x="589" y="711" class="t7">Team</text>

              <text x="859" y="604" class="t7">Requirement Analysis</text>
              <text x="950" y="587" class="t7">Model</text><text x="950" y="628" class="t7">Diagram</text>
              <text x="859" y="681" class="t7">System Analysis</text>
              <text x="933" y="657" class="t7">Model</text><text x="973" y="655" class="t7">Analysis</text>
              <text x="933" y="690" class="t7">Diagram</text>
              <rect x="983" y="666" width="3" height="9" fill="#4466cc"/><rect x="983" y="683" width="3" height="9" fill="#cc3366"/><rect x="983" y="699" width="3" height="9" fill="#cc3366"/>

              <text x="894" y="732" class="t7">Model</text><text x="935" y="732" class="t7">Design Model</text>
              <text x="894" y="778" class="t7">Diagram</text>
              <rect x="944" y="745" width="9" height="9" class="ci-b"/><text x="955" y="753" class="t7">Class Diagram</text>
              <rect x="944" y="761" width="9" height="9" class="ci-r"/><text x="955" y="770" class="t7">Sequence</text>
              <rect x="944" y="778" width="9" height="9" class="ci-r"/><text x="955" y="786" class="t7">Collaboration</text>
              <rect x="944" y="794" width="9" height="9" class="ci-r"/><text x="955" y="803" class="t7">Statechart</text>

              <text x="558" y="736" class="t7">Model</text><text x="516" y="735" class="t7">Model</text>
              <text x="553" y="758" class="t7">Product</text><text x="500" y="756" class="t7">Nodes</text>
              <text x="580" y="785" class="t7">Model</text><text x="472" y="784" class="t7">Implementation Model</text>
              <text x="572" y="814" class="t7">Diagram</text><text x="490" y="805" class="t7">Unit Diagram</text><text x="490" y="822" class="t7">Unit Diagram</text>
            </svg>
          </div>
          <div class="vs"><i class="vthumb vt-e"></i></div>
        </div>
        <div class="hs"><i class="hthumb ht-b2"></i></div>
      </section>
    </div>
  </main>

  <footer class="bottombar">
    <span class="tri-u"></span><span class="tri-d"></span>
    <span class="grip-h"></span>
  </footer>
</div>
</body>
</html>
```
FILE: styles.css
```css
* { box-sizing: border-box; }
html, body { margin: 0; padding: 0; background: #fff; }
body { width: 1500px; height: 1000px; overflow: hidden; font-family: "Liberation Sans", "Noto Sans CJK JP", sans-serif; }
.defs { position: absolute; width: 0; height: 0; }

.app { position: relative; width: 1500px; height: 880px; background: #3c3f41; border-top: 1px solid #a9abad; display: flex; flex-direction: column; color: #bbb; filter: blur(.35px); }

/* title + menu */
.titlebar { height: 26px; display: flex; align-items: center; flex: none; padding: 0 0 3px 5px; }
.logo { width: 20px; height: 20px; flex: none; }
.logo-a { font: bold 15px "Liberation Sans", sans-serif; fill: #fff; }
.app-name { margin-left: 11px; font: 14px "Open Sans", sans-serif; color: #bdbdbd; }
.win-ctrls { margin-left: auto; display: flex; align-items: center; color: #bfbfbf; padding-right: 16px; }
.win-ctrls svg { width: 13px; height: 13px; fill: none; }
.wc-res { margin-left: 39px; }
.wc-close { margin-left: 39px; }

.menubar { height: 26px; flex: none; display: flex; align-items: center; font: 14px "Open Sans", "Noto Sans CJK JP", sans-serif; color: #c4c4c4; padding: 0 0 6px 8px; white-space: nowrap; }
.mi { flex: none; transform: scaleX(.8); transform-origin: left center; }
.m1 { width: 73px; transform: scaleX(.77); }
.m2 { width: 63px; transform: scaleX(.97); }
.m3 { width: 50px; transform: scaleX(.97); }
.m4 { width: 66px; transform: scaleX(.99); }
.m5 { width: 62px; transform: scaleX(.97); }
.m6 { width: 65px; }
.m7 { width: 89px; transform: scaleX(.76); }
.m8 { width: 87px; transform: scaleX(.78); }
.m9 { transform: scaleX(.85); }

/* toolbars */
.maintools { height: 32px; flex: none; display: flex; align-items: center; }
.maintools > .grip { width: 10px; }
.tools { height: 33px; flex: none; display: flex; align-items: center; background: #3c3f41; }
.win-top .tools { height: 34px; }
.win-active .tools { height: 33px; }
.c { position: relative; flex: none; width: 20px; height: 24px; display: flex; justify-content: center; align-items: center; color: #d6d6d6; }
.c.dim, .dd.dim { color: #5d6062; }
.ic { flex: none; width: 20px; height: 20px; display: block; }
.maintools .ic { width: 21px; height: 21px; }
.maintools .c.dim { color: #606365; }
.on::after { content: ""; position: absolute; left: -4px; right: -4px; bottom: -3px; height: 2px; background: #3f80c8; }
.dd { flex: none; width: 20px; display: flex; justify-content: center; color: #b9b9b9; }
.dd::before { content: ""; width: 0; height: 0; border-left: 3.5px solid transparent; border-right: 3.5px solid transparent; border-top: 7px solid currentColor; }
.gl { font: bold 12px "Liberation Sans", sans-serif; fill: currentColor; }
.gs { font: bold 10px "Liberation Mono", monospace; fill: currentColor; text-anchor: middle; }
.g1 { margin-left: 1px; } .g2 { margin-left: 2px; } .g5 { margin-left: 5px; } .g6 { margin-left: 6px; } .g7 { margin-left: 7px; }
.g8 { margin-left: 8px; } .g9 { margin-left: 9px; } .g10 { margin-left: 10px; } .g12 { margin-left: 12px; } .g13 { margin-left: 13px; }
.g14 { margin-left: 14px; } .g15 { margin-left: 15px; } .g39 { margin-left: 39px; }

.grip { flex: none; width: 12px; height: 17px; display: flex; justify-content: center; background-image: radial-gradient(circle, #b5b5b5 1.2px, transparent 1.6px); background-size: 3px 4.500px; background-repeat: repeat-y; background-position: center top; }

/* tabs */
.tabs { height: 30px; flex: none; display: flex; align-items: center; padding: 6px 0 0 22px; border-bottom: 1px solid #5d6264; font: 13.400px "Open Sans", sans-serif; color: #b5b5b5; }
.tab { position: relative; display: flex; align-items: center; flex: none; }
.tab-on::after { content: ""; position: absolute; left: -8px; right: -8px; bottom: -3px; height: 3px; background: #3b6ea5; }
.dicon { flex: none; width: 18px; height: 18px; display: block; }
.tab-t { margin-left: 4.500px; }
.tab-x { margin-left: 4px; width: 14px; height: 14px; color: #a8a8a8; }
.tab-sep { flex: none; width: 1px; height: 14px; background: #5b5e60; margin: 0 8px 0 6px; }
.side-arrows { position: absolute; left: 1px; top: 91px; display: flex; flex-direction: column; gap: 3px; z-index: 2; }
.tri-l { width: 0; height: 0; border-top: 6px solid transparent; border-bottom: 6px solid transparent; border-right: 7px solid #bdbdbd; }
.tri-r { width: 0; height: 0; border-top: 6.500px solid transparent; border-bottom: 6.500px solid transparent; border-left: 7px solid #bdbdbd; }

/* workspace */
.workspace { flex: 1; display: flex; min-height: 0; }
.side { flex: none; width: 13px; padding-top: 363px; }
.side .grip { width: 10px; height: 14px; }
.desktop { flex: 1; background: #124a50; display: grid; grid-template-columns: 496px 489px 488px; grid-template-rows: 377px 364px; padding: 7px 0 0 7px; min-height: 0; }

.win { display: flex; flex-direction: column; background: #3c3f41; height: 364px; }
.win-left { width: 482px; grid-column: 1; }
.win-mid { width: 481px; grid-column: 2; }
.win-right { width: 488px; height: 740px; grid-column: 3; grid-row: 1 / span 2; margin-top: 1px; }
.wtitle { height: 28px; flex: none; display: flex; align-items: center; background: #2e3032; padding-left: 10px; font: 14px "Liberation Sans", "Noto Sans CJK JP", sans-serif; color: #8e8e8e; white-space: nowrap; }
.win-active .wtitle { height: 29px; background: #212325; color: #e2e2e2; }
.wt { margin-left: 7px; }
.wbtn { margin-left: auto; display: flex; gap: 14px; padding-right: 7px; color: #9a9a9a; }
.win-active .wbtn { color: #e0e0e0; }
.wbtn svg { width: 14px; height: 14px; }

.wbody { flex: none; display: flex; }
.win-left .wbody { padding-left: 1px; }
.cv { background: #fff; flex: none; position: relative; overflow: hidden; }
.cv-a { width: 470px; height: 289px; }
.cv-b { width: 469px; height: 289px; }
.cv-c { width: 353px; height: 666px; }
.cv-d { width: 470px; height: 290px; }
.cv-e { width: 469px; height: 290px; }
.dg { display: block; width: 100%; height: 100%; }
.vs { flex: 1; min-width: 0; position: relative; background: #3c3f41; }
.vthumb { display: block; width: 100%; background: #53585b; }
.vt-a { height: 95px; margin-top: 61px; }
.vt-b { height: 103px; margin-top: 63px; }
.vt-c { height: 273px; margin-top: 147px; }
.vt-d { height: 97px; margin-top: 73px; }
.vt-e { height: 121px; margin-top: 82px; }
.hs { height: 12px; flex: none; background: #3c3f41; }
.hthumb { display: block; height: 100%; background: #53585b; }
.ht-a { width: 192px; margin-left: 116px; }
.ht-b { width: 196px; margin-left: 101px; }
.ht-b2 { width: 196px; margin-left: 136px; }
.ht-c { width: 98px; margin-left: 178px; }

/* palette */
.palette { width: 123px; flex: none; padding: 0 14px 0 15px; display: flex; flex-direction: column; align-items: stretch; }
.pal-dots { height: 15px; flex: none; align-self: center; width: 16px; background-image: radial-gradient(circle, #b0b0b0 1px, transparent 1.300px); background-size: 4px 3px; background-repeat: repeat-x; background-position: left 5px; }
.pal-head, .pal-foot { height: 24px; flex: none; background: #53565a; border: 1px solid #5e6265; border-radius: 3px; font: 14px "Noto Sans CJK JP", sans-serif; color: #b0b0b0; text-align: center; line-height: 22px; letter-spacing: 1px; }
.pal-list { height: 596px; flex: none; display: flex; }
.pal-items { width: 82px; flex: none; background: #f4f4f4; }
.pal-svg { display: block; width: 82px; height: 595px; }
.pal-sb { flex: 1; }
.pal-thumb { display: block; height: 289px; background: #53585b; }
.ps { fill: none; stroke: #333; stroke-width: 1.300; }

/* diagram styles */
.t7 { font: 7px "Liberation Sans", sans-serif; fill: #333; }
.t8 { font: 7.600px "Liberation Sans", sans-serif; fill: #333; }
.t9 { font: 8.600px "Liberation Sans", sans-serif; fill: #333; }
.t10 { font: 9.300px "Liberation Sans", sans-serif; fill: #333; }
.cv-d .t10 { font-size: 9.600px; }
.m { text-anchor: middle; }
.bl { fill: #2323ff; }
.bd { font-weight: bold; fill: #000; }
.ttl { font: bold 11px "Liberation Sans", sans-serif; fill: #fff; letter-spacing: .25px; }
.tn { font: bold 7px "Liberation Sans", sans-serif; fill: #5a3c00; }
.tg { fill: #fdb900; stroke: #555; stroke-width: .7; }
.k { fill: none; stroke: #222; stroke-width: 1; }
rect.k { fill: #eee; }
rect.w { fill: #fff; }
.o { stroke: #111; stroke-width: 1.300; }
.ll { fill: none; stroke: #333; stroke-width: 1; stroke-dasharray: 6 3; }
.dsh { fill: none; stroke: #333; stroke-width: 1.200; stroke-dasharray: 6 3; }
.dsh1 { fill: none; stroke: #333; stroke-width: 1; stroke-dasharray: 5 3; }
.act { fill: #c5e6f5; stroke: #222; stroke-width: 1; }
.c1 { fill: none; stroke: #444; stroke-width: 1; }
.nd { fill: #ffff33; stroke: #111; stroke-width: 1.600; }
.thick { fill: none; stroke: #111; stroke-width: 1.500; }
.bx { fill: #fff; stroke: #222; stroke-width: 1.300; }
.doc { fill: #8ce8e2; stroke: #555; stroke-width: .8; }
.b { fill: none; stroke-width: 1.800; }
.lp path, .lo path, .lg path, .lb path, .lt path { fill: none; stroke-width: 1; }
.lp { stroke: #ff9fb6; } .lo { stroke: #ffcc80; } .lg { stroke: #a7d79a; } .lb { stroke: #96d6e6; } .lt { stroke: #b4d8d8; }
.dg-arc { fill: none; stroke: #777; stroke-width: 1.200; stroke-dasharray: 2.500 2.500; }
.ci-b { fill: #fff; stroke: #4a6fd0; stroke-width: 1.400; }
.ci-r { fill: #f6c6d3; stroke: #d04070; stroke-width: 1.400; }
.rot-a { transform: rotate(-90deg); transform-origin: 46px 665px; }
.rot-b { transform: rotate(-90deg); transform-origin: 46px 772px; }
.minimap { position: absolute; right: 0; bottom: 0; width: 24px; height: 25px; background: #3c3f41; padding: 5px 1px 2px 3px; }
.minimap svg { display: block; width: 20px; height: 18px; }

/* bottom */
.bottombar { height: 11px; flex: none; display: flex; align-items: center; padding-left: 16px; }
.tri-u { width: 0; height: 0; border-left: 7px solid transparent; border-right: 7px solid transparent; border-bottom: 7px solid #bdbdbd; }
.tri-d { width: 0; height: 0; border-left: 7px solid transparent; border-right: 7px solid transparent; border-top: 7px solid #bdbdbd; }
.grip-h { margin-left: 705px; width: 16px; height: 4px; background-image: radial-gradient(circle, #c0c0c0 1.500px, transparent 1.900px); background-size: 5.500px 4px; background-repeat: repeat-x; }
```
